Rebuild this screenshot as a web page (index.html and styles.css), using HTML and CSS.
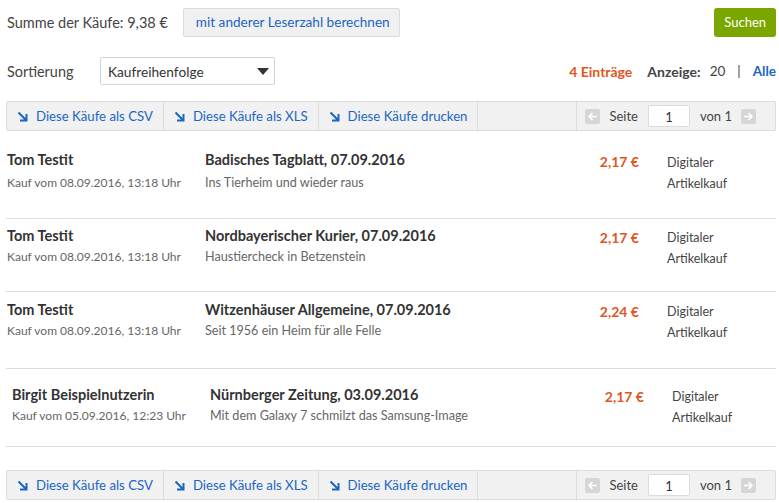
FILE: index.html
```html
<!doctype html>
<html lang="de">
<head>
	<meta charset="UTF-8">
	<title>Käufe</title>
	<link rel="stylesheet" href="styles.css">
</head>
<body>
	<div id="page">
		<div class="bar-top">
			<span class="sum">Summe der Käufe: 9,38 €</span>
			<span class="btn-light">mit anderer Leserzahl berechnen</span>
			<span class="btn-green">Suchen</span>
		</div>

		<div class="bar-sort">
			<span class="sort-label">Sortierung</span>
			<div class="select">
				<span>Kaufreihenfolge</span>
				<i class="caret"></i>
			</div>
			<div class="info">
				<span class="count">4 Einträge</span>
				<span class="show">Anzeige:</span>
				<span class="num">20</span>
				<span class="pipe">|</span>
				<a class="all">Alle</a>
			</div>
		</div>

		<div class="toolbar">
			<a class="tool"><svg width="11" height="11" viewBox="0 0 11 11"><path d="M1.5 1.5 L9 9 M9.5 3 V9.5 H3" fill="none" stroke="#1a66c4" stroke-width="2"/></svg>Diese Käufe als CSV</a>
			<a class="tool"><svg width="11" height="11" viewBox="0 0 11 11"><path d="M1.5 1.5 L9 9 M9.5 3 V9.5 H3" fill="none" stroke="#1a66c4" stroke-width="2"/></svg>Diese Käufe als XLS</a>
			<a class="tool"><svg width="11" height="11" viewBox="0 0 11 11"><path d="M1.5 1.5 L9 9 M9.5 3 V9.5 H3" fill="none" stroke="#1a66c4" stroke-width="2"/></svg>Diese Käufe drucken</a>
			<div class="spacer"></div>
			<div class="pager">
				<span class="pg-btn"><svg width="11" height="11" viewBox="0 0 11 11"><path d="M10 5.5 H2 M5.5 2 L2 5.5 L5.5 9" fill="none" stroke="#fff" stroke-width="1.6"/></svg></span>
				<span>Seite</span>
				<span class="pg-input">1</span>
				<span>von 1</span>
				<span class="pg-btn"><svg width="11" height="11" viewBox="0 0 11 11"><path d="M1 5.5 H9 M5.5 2 L9 5.5 L5.5 9" fill="none" stroke="#fff" stroke-width="1.6"/></svg></span>
			</div>
		</div>

		<ul class="orders">
			<li class="order first">
				<div class="buyer"><b>Tom Testit</b><span>Kauf vom 08.09.2016, 13:18 Uhr</span></div>
				<div class="item"><b>Badisches Tagblatt, 07.09.2016</b><span>Ins Tierheim und wieder raus</span></div>
				<div class="price">2,17 €</div>
				<div class="type">Digitaler<br>Artikelkauf</div>
			</li>
			<li class="order short">
				<div class="buyer"><b>Tom Testit</b><span>Kauf vom 08.09.2016, 13:18 Uhr</span></div>
				<div class="item"><b>Nordbayerischer Kurier, 07.09.2016</b><span>Haustiercheck in Betzenstein</span></div>
				<div class="price">2,17 €</div>
				<div class="type">Digitaler<br>Artikelkauf</div>
			</li>
			<li class="order">
				<div class="buyer"><b>Tom Testit</b><span>Kauf vom 08.09.2016, 13:18 Uhr</span></div>
				<div class="item"><b>Witzenhäuser Allgemeine, 07.09.2016</b><span>Seit 1956 ein Heim für alle Felle</span></div>
				<div class="price">2,24 €</div>
				<div class="type">Digitaler<br>Artikelkauf</div>
			</li>
			<li class="order shifted">
				<div class="buyer"><b>Birgit Beispielnutzerin</b><span>Kauf vom 05.09.2016, 12:23 Uhr</span></div>
				<div class="item"><b>Nürnberger Zeitung, 03.09.2016</b><span>Mit dem Galaxy 7 schmilzt das Samsung-Image</span></div>
				<div class="price">2,17 €</div>
				<div class="type">Digitaler<br>Artikelkauf</div>
			</li>
		</ul>

		<div class="toolbar bottom">
			<a class="tool"><svg width="11" height="11" viewBox="0 0 11 11"><path d="M1.5 1.5 L9 9 M9.5 3 V9.5 H3" fill="none" stroke="#1a66c4" stroke-width="2"/></svg>Diese Käufe als CSV</a>
			<a class="tool"><svg width="11" height="11" viewBox="0 0 11 11"><path d="M1.5 1.5 L9 9 M9.5 3 V9.5 H3" fill="none" stroke="#1a66c4" stroke-width="2"/></svg>Diese Käufe als XLS</a>
			<a class="tool"><svg width="11" height="11" viewBox="0 0 11 11"><path d="M1.5 1.5 L9 9 M9.5 3 V9.5 H3" fill="none" stroke="#1a66c4" stroke-width="2"/></svg>Diese Käufe drucken</a>
			<div class="spacer"></div>
			<div class="pager">
				<span class="pg-btn"><svg width="11" height="11" viewBox="0 0 11 11"><path d="M10 5.5 H2 M5.5 2 L2 5.5 L5.5 9" fill="none" stroke="#fff" stroke-width="1.6"/></svg></span>
				<span>Seite</span>
				<span class="pg-input">1</span>
				<span>von 1</span>
				<span class="pg-btn"><svg width="11" height="11" viewBox="0 0 11 11"><path d="M1 5.5 H9 M5.5 2 L9 5.5 L5.5 9" fill="none" stroke="#fff" stroke-width="1.6"/></svg></span>
			</div>
		</div>
	</div>
</body>
</html>
```

FILE: styles.css
```css
*{
	margin: 0;
	padding: 0;
	box-sizing: border-box;
}

body{
	font-family: Lato, "Open Sans", sans-serif;
	font-size: 13px;
	color: #333;
	background: #fff;
}

li{
	list-style: none;
}

#page{
	padding: 8px 3px 0 6px;
}

/* top line */
.bar-top{
	display: flex;
	align-items: center;
	height: 29px;
}

.sum{
	font-size: 14.5px;
	color: #444;
	padding-left: 1px;
}

.btn-light{
	margin-left: 15px;
	height: 29px;
	line-height: 27px;
	padding: 0 9px 0 12px;
	background: #f0f0f0;
	border: 1px solid #dcdcdc;
	border-radius: 2px;
	color: #1a66c4;
	font-size: 13.6px;
}

.btn-green{
	margin-left: auto;
	height: 29px;
	line-height: 29px;
	padding: 0 10px;
	background: #7aa600;
	border-radius: 3px;
	color: #fff;
	font-size: 13px;
}

/* sorting line */
.bar-sort{
	display: flex;
	align-items: center;
	margin-top: 20px;
	height: 28px;
}

.sort-label{
	width: 94px;
	padding-left: 1px;
	font-size: 14.4px;
	color: #444;
}

.select{
	display: flex;
	align-items: center;
	width: 175px;
	height: 28px;
	padding: 0 4px 0 7px;
	border: 1px solid #d4d4d4;
	border-radius: 2px;
	font-size: 13.7px;
}

.caret{
	margin-left: auto;
	width: 0;
	height: 0;
	border-left: 6px solid transparent;
	border-right: 6px solid transparent;
	border-top: 7px solid #333;
	margin-right: 1px;
}

.info{
	margin-left: auto;
	display: flex;
	align-items: center;
	font-size: 13.5px;
}

.count{
	color: #e0561c;
	font-weight: bold;
	font-size: 14px;
	margin-right: 15px;
}

.show{
	font-weight: bold;
	font-size: 14px;
	color: #444;
}

.num{
	margin-left: 9px;
	color: #444;
}

.pipe{
	margin: 0 12px;
	color: #444;
}

.all{
	color: #1a66c4;
	font-weight: bold;
}

/* toolbar */
.toolbar{
	display: flex;
	align-items: stretch;
	margin-top: 16px;
	height: 30px;
	background: #f1f1f1;
	border: 1px solid #dcdcdc;
	border-radius: 2px;
}

.toolbar.bottom{
	margin-top: 23px;
}

.tool{
	display: flex;
	align-items: center;
	gap: 8px;
	padding: 0 10px;
	border-right: 1px solid #dcdcdc;
	color: #1a66c4;
	font-size: 13.2px;
	white-space: nowrap;
}

.tool svg{
	margin-top: 1px;
}

.spacer{
	flex: 1;
}

.pager{
	display: flex;
	align-items: center;
	padding: 0 19px 0 8px;
	border-left: 1px solid #dcdcdc;
	color: #444;
	font-size: 13px;
	gap: 9px;
}

.pg-btn{
	display: flex;
	align-items: center;
	justify-content: center;
	width: 15px;
	height: 15px;
	background: #d6d6d6;
	border-radius: 2px;
}

.pg-input{
	width: 42px;
	height: 22px;
	line-height: 22px;
	margin: 0 1px;
	background: #fff;
	border: 1px solid #dcdcdc;
	border-radius: 2px;
	text-align: center;
	color: #333;
}

/* order list */
.orders{
	margin-top: 12px;
}

.order{
	display: flex;
	height: 77px;
	padding-top: 7px;
	border-bottom: 1px solid #dcdcdc;
	line-height: 21px;
}

.order.first{
	height: 76px;
	padding-top: 6px;
}

.order.first .buyer span,
.order.first .item span{
	margin-top: 2px;
}

.order.first .type{
	padding-top: 3px;
}

.order.short{
	height: 73px;
	padding-top: 6px;
}

.order.shifted{
	height: 78px;
	padding-top: 15px;
	padding-left: 5px;
}

.order.shifted .type{
	width: 104px;
}

.buyer, .item{
	display: flex;
	flex-direction: column;
}

.buyer{
	width: 199px;
	padding-left: 1px;
}

.item{
	flex: 1;
}

.buyer b{
	font-size: 14.5px;
	color: #333;
}

.item b{
	font-size: 14.5px;
	color: #333;
}

.buyer span{
	font-size: 12px;
	color: #666;
}

.item span{
	font-size: 12.6px;
	color: #666;
}

.price{
	width: 100px;
	padding-top: 2px;
	text-align: right;
	font-size: 14px;
	font-weight: bold;
	color: #e0561c;
	margin-right: 28px;
}

.type{
	width: 109px;
	padding-top: 2px;
	font-size: 12.5px;
	color: #444;
}
```
